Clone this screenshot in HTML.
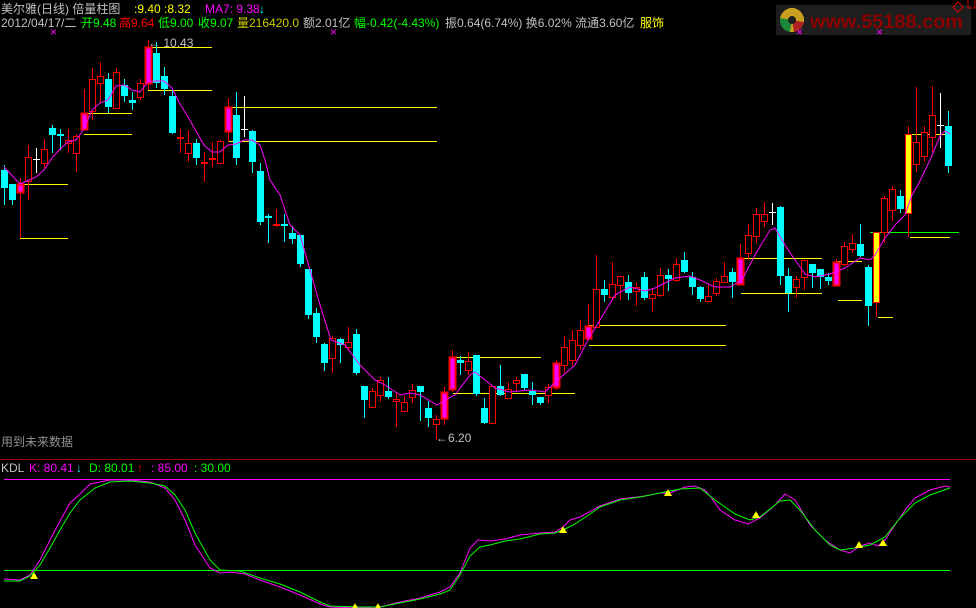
<!DOCTYPE html>
<html><head><meta charset="utf-8"><style>
html,body{margin:0;padding:0;background:#000;width:976px;height:608px;overflow:hidden}
svg{display:block}
text{font-family:"Liberation Sans","Noto Sans CJK SC",sans-serif;font-size:12px}
.r{fill:#000;stroke:#f00;stroke-width:1}
.m{fill:#f0f;stroke:#f00;stroke-width:2}
.c{fill:#0ff}
.y{fill:#ff0;stroke:#f00;stroke-width:1}
.wr{stroke:#f00;stroke-width:1}
.wc{stroke:#0ff;stroke-width:1}
.ww{stroke:#fff;stroke-width:1}
.hl{stroke:#ff0;stroke-width:1}
</style></head><body>
<svg width="976" height="608" viewBox="0 0 976 608" xmlns="http://www.w3.org/2000/svg" shape-rendering="crispEdges">
<rect width="976" height="608" fill="#000"/>
<text x="1" y="13" fill="#c0c0c0">美尔雅(日线) 倍量柱图</text>
<text x="134" y="13" fill="#ff0">:9.40 :8.32</text>
<text x="205" y="13" fill="#f0f">MA7: 9.38</text>
<text x="259" y="13" fill="#0ff">↓</text>
<text x="1" y="27" fill="#c0c0c0">2012/04/17/二</text>
<text x="81" y="27" fill="#0f0">开9.48</text>
<text x="119" y="27" fill="#f00">高9.64</text>
<text x="158" y="27" fill="#0f0">低9.00</text>
<text x="198" y="27" fill="#0f0">收9.07</text>
<text x="237" y="27" fill="#cc0">量216420.0</text>
<text x="303" y="27" fill="#c0c0c0">额2.01亿</text>
<text x="354" y="27" fill="#0f0">幅-0.42(-4.43%)</text>
<text x="445" y="27" fill="#c0c0c0">振0.64(6.74%) 换6.02% 流通3.60亿</text>
<text x="640" y="27" fill="#ff0">服饰</text>
<rect x="776" y="5" width="195" height="30" fill="#1e1e1e"/>
<circle cx="792" cy="20" r="12" fill="#c8a020"/>
<path d="M792 20 L780 18 A12 12 0 0 0 790 32 Z" fill="#1a8a3a"/>
<path d="M792 20 L804 22 A12 12 0 0 1 794 32 Z" fill="#b02020"/>
<circle cx="792" cy="20" r="4" fill="#1e1e1e"/>
<text x="810" y="28" fill="#8b0000" textLength="153" lengthAdjust="spacingAndGlyphs" style="font-size:19px;font-weight:bold">www.55188.com</text>
<path d="M958 2 L963 7 L958 12 L953 7 Z" fill="none" stroke="#c00"/>
<path d="M968 0 V8 H975 V0" fill="none" stroke="#c00"/>
<g fill="#f0f" style="font-size:9px"><text x="50" y="36">×</text><text x="330" y="36">×</text><text x="796" y="36">×</text><text x="876" y="36">×</text></g>
<g class="hl">
<line x1="20" y1="184.5" x2="68" y2="184.5"/><line x1="20" y1="238.5" x2="68" y2="238.5"/>
<line x1="84" y1="113.5" x2="132" y2="113.5"/><line x1="84" y1="134.5" x2="132" y2="134.5"/>
<line x1="148" y1="47.5" x2="212" y2="47.5"/><line x1="148" y1="90.5" x2="212" y2="90.5"/>
<line x1="228" y1="107.5" x2="437" y2="107.5"/><line x1="228" y1="141.5" x2="437" y2="141.5"/>
<line x1="453" y1="357.5" x2="541" y2="357.5"/><line x1="453" y1="393.5" x2="575" y2="393.5"/>
<line x1="589" y1="325.5" x2="726" y2="325.5"/><line x1="589" y1="345.5" x2="726" y2="345.5"/>
<line x1="741" y1="258.5" x2="822" y2="258.5"/><line x1="741" y1="293.5" x2="822" y2="293.5"/>
<line x1="838" y1="261.5" x2="862" y2="261.5"/><line x1="838" y1="300.5" x2="862" y2="300.5"/>
<line x1="878" y1="317.5" x2="893" y2="317.5"/>
<line x1="910" y1="237.5" x2="950" y2="237.5"/><line x1="910" y1="134.5" x2="948" y2="134.5"/>
</g>
<line x1="870" y1="232.5" x2="959" y2="232.5" stroke="#0f0"/>
<text x="148" y="47" fill="#c0c0c0">← 10.43</text>
<text x="436" y="442" fill="#c0c0c0">←6.20</text>
<text x="1" y="446" fill="#909090">用到未来数据</text>
<g id="candles">
<line class="wc" x1="4.5" y1="165" x2="4.5" y2="205"/><rect class="c" x="1" y="170" width="7" height="18"/>
<line class="wc" x1="12.5" y1="184" x2="12.5" y2="205"/><rect class="c" x="9" y="184" width="7" height="16"/>
<line class="wr" x1="20.5" y1="178" x2="20.5" y2="238"/><rect class="m" x="17.5" y="184.5" width="6" height="8"/>
<line class="wr" x1="28.5" y1="145" x2="28.5" y2="200"/><rect class="r" x="25.5" y="157.5" width="6" height="24"/>
<line class="ww" x1="36.5" y1="148" x2="36.5" y2="173"/><line class="ww" x1="33" y1="159.5" x2="40" y2="159.5"/>
<line class="wr" x1="44.5" y1="139" x2="44.5" y2="168"/><rect class="r" x="41.5" y="149.5" width="6" height="14"/>
<line class="wc" x1="52.5" y1="125" x2="52.5" y2="153"/><rect class="c" x="49" y="128" width="7" height="7"/>
<line class="wc" x1="60.5" y1="129" x2="60.5" y2="150"/><rect class="c" x="57" y="134" width="7" height="2"/>
<line class="wr" x1="68.5" y1="129" x2="68.5" y2="153"/><rect class="r" x="65.5" y="140.5" width="6" height="3"/>
<line class="wr" x1="76.5" y1="134" x2="76.5" y2="172"/><rect class="r" x="73.5" y="136.5" width="6" height="17"/>
<line class="wr" x1="84.5" y1="89" x2="84.5" y2="130"/><rect class="m" x="81.5" y="113.5" width="6" height="16"/>
<line class="wr" x1="92.5" y1="68" x2="92.5" y2="120"/><rect class="r" x="89.5" y="79.5" width="6" height="32"/>
<line class="wr" x1="100.5" y1="62" x2="100.5" y2="103"/><rect class="r" x="97.5" y="76.5" width="6" height="7"/>
<line class="wc" x1="108.5" y1="73" x2="108.5" y2="113"/><rect class="c" x="105" y="79" width="7" height="28"/>
<line class="wr" x1="116.5" y1="68" x2="116.5" y2="108"/><rect class="r" x="113.5" y="72.5" width="6" height="36"/>
<line class="wc" x1="124.5" y1="79" x2="124.5" y2="102"/><rect class="c" x="121" y="85" width="7" height="11"/>
<line class="wc" x1="132.5" y1="92" x2="132.5" y2="110"/><rect class="c" x="129" y="100" width="7" height="3"/>
<line class="wr" x1="140.5" y1="79" x2="140.5" y2="100"/><rect class="r" x="137.5" y="83.5" width="6" height="14"/>
<line class="wr" x1="148.5" y1="40" x2="148.5" y2="90"/><rect class="m" x="145.5" y="47.5" width="6" height="36"/>
<line class="wc" x1="156.5" y1="42" x2="156.5" y2="88"/><rect class="c" x="153" y="53" width="7" height="30"/>
<line class="wc" x1="164.5" y1="67" x2="164.5" y2="95"/><rect class="c" x="161" y="76" width="7" height="13"/>
<line class="wc" x1="172.5" y1="90" x2="172.5" y2="134"/><rect class="c" x="169" y="96" width="7" height="37"/>
<line class="wr" x1="180.5" y1="129" x2="180.5" y2="153"/><rect fill="#f00" x="177" y="137" width="7" height="2"/>
<line class="wr" x1="188.5" y1="130" x2="188.5" y2="162"/><rect class="r" x="185.5" y="143.5" width="6" height="10"/>
<line class="wc" x1="196.5" y1="139" x2="196.5" y2="165"/><rect class="c" x="193" y="143" width="7" height="15"/>
<line class="wr" x1="204.5" y1="152" x2="204.5" y2="182"/><rect fill="#f00" x="201" y="162" width="7" height="2"/>
<line class="wr" x1="212.5" y1="142" x2="212.5" y2="167"/><rect fill="#f00" x="209" y="158" width="7" height="2"/>
<line class="wr" x1="220.5" y1="140" x2="220.5" y2="164"/><rect class="r" x="217.5" y="141.5" width="6" height="22"/>
<line class="wr" x1="228.5" y1="98" x2="228.5" y2="142"/><rect class="m" x="225.5" y="107.5" width="6" height="24"/>
<line class="wc" x1="236.5" y1="92" x2="236.5" y2="165"/><rect class="c" x="233" y="115" width="7" height="43"/>
<line class="ww" x1="244.5" y1="96" x2="244.5" y2="137"/><line class="ww" x1="241" y1="129.5" x2="248" y2="129.5"/>
<line class="wc" x1="252.5" y1="130" x2="252.5" y2="173"/><rect class="c" x="249" y="131" width="7" height="31"/>
<line class="wc" x1="260.5" y1="163" x2="260.5" y2="225"/><rect class="c" x="257" y="171" width="7" height="51"/>
<line class="wc" x1="268.5" y1="214" x2="268.5" y2="243"/><rect class="c" x="265" y="216" width="7" height="2"/>
<line class="wr" x1="276.5" y1="209" x2="276.5" y2="227"/><rect fill="#f00" x="273" y="224" width="7" height="2"/>
<line class="wc" x1="284.5" y1="214" x2="284.5" y2="242"/><rect class="c" x="281" y="224" width="7" height="2"/>
<line class="wc" x1="292.5" y1="226" x2="292.5" y2="244"/><rect class="c" x="289" y="233" width="7" height="6"/>
<line class="wc" x1="300.5" y1="235" x2="300.5" y2="267"/><rect class="c" x="297" y="235" width="7" height="29"/>
<line class="wc" x1="308.5" y1="269" x2="308.5" y2="319"/><rect class="c" x="305" y="269" width="7" height="46"/>
<line class="wc" x1="316.5" y1="308" x2="316.5" y2="343"/><rect class="c" x="313" y="313" width="7" height="24"/>
<line class="wc" x1="324.5" y1="343" x2="324.5" y2="371"/><rect class="c" x="321" y="344" width="7" height="19"/>
<line class="wr" x1="332.5" y1="336" x2="332.5" y2="373"/><rect class="r" x="329.5" y="338.5" width="6" height="20"/>
<line class="wc" x1="340.5" y1="338" x2="340.5" y2="363"/><rect class="c" x="337" y="339" width="7" height="6"/>
<line class="wr" x1="348.5" y1="327" x2="348.5" y2="351"/><rect class="r" x="345.5" y="342.5" width="6" height="5"/>
<line class="wc" x1="356.5" y1="329" x2="356.5" y2="375"/><rect class="c" x="353" y="334" width="7" height="39"/>
<line class="wc" x1="364.5" y1="386" x2="364.5" y2="418"/><rect class="c" x="361" y="386" width="7" height="14"/>
<line class="wr" x1="372.5" y1="388" x2="372.5" y2="407"/><rect class="r" x="369.5" y="391.5" width="6" height="16"/>
<line class="wr" x1="380.5" y1="377" x2="380.5" y2="402"/><rect class="r" x="377.5" y="380.5" width="6" height="15"/>
<line class="wc" x1="388.5" y1="377" x2="388.5" y2="399"/><rect class="c" x="385" y="391" width="7" height="6"/>
<line class="wr" x1="396.5" y1="393" x2="396.5" y2="427"/><rect class="r" x="393.5" y="399.5" width="6" height="2"/>
<line class="wr" x1="404.5" y1="396" x2="404.5" y2="412"/><rect class="r" x="401.5" y="402.5" width="6" height="9"/>
<line class="wr" x1="412.5" y1="384" x2="412.5" y2="403"/><rect class="r" x="409.5" y="390.5" width="6" height="7"/>
<line class="wc" x1="420.5" y1="386" x2="420.5" y2="421"/><rect class="c" x="417" y="386" width="7" height="6"/>
<line class="wc" x1="428.5" y1="401" x2="428.5" y2="427"/><rect class="c" x="425" y="408" width="7" height="10"/>
<line class="wr" x1="436.5" y1="415" x2="436.5" y2="440"/><rect class="r" x="433.5" y="419.5" width="6" height="5"/>
<line class="wr" x1="444.5" y1="387" x2="444.5" y2="425"/><rect class="m" x="441.5" y="392.5" width="6" height="26"/>
<line class="wr" x1="452.5" y1="350" x2="452.5" y2="392"/><rect class="m" x="449.5" y="357.5" width="6" height="32"/>
<line class="wc" x1="460.5" y1="356" x2="460.5" y2="375"/><rect class="c" x="457" y="360" width="7" height="3"/>
<line class="wr" x1="468.5" y1="352" x2="468.5" y2="375"/><rect class="r" x="465.5" y="361.5" width="6" height="9"/>
<line class="wc" x1="476.5" y1="355" x2="476.5" y2="396"/><rect class="c" x="473" y="355" width="7" height="39"/>
<line class="wc" x1="484.5" y1="398" x2="484.5" y2="424"/><rect class="c" x="481" y="408" width="7" height="15"/>
<line class="wr" x1="492.5" y1="386" x2="492.5" y2="424"/><rect class="r" x="489.5" y="386.5" width="6" height="37"/>
<line class="wc" x1="500.5" y1="365" x2="500.5" y2="396"/><rect class="c" x="497" y="386" width="7" height="9"/>
<line class="wr" x1="508.5" y1="382" x2="508.5" y2="399"/><rect class="r" x="505.5" y="389.5" width="6" height="9"/>
<line class="wr" x1="516.5" y1="377" x2="516.5" y2="391"/><rect class="r" x="513.5" y="380.5" width="6" height="3"/>
<line class="wc" x1="524.5" y1="374" x2="524.5" y2="390"/><rect class="c" x="521" y="374" width="7" height="14"/>
<line class="wc" x1="532.5" y1="382" x2="532.5" y2="405"/><rect class="c" x="529" y="391" width="7" height="4"/>
<line class="wc" x1="540.5" y1="397" x2="540.5" y2="405"/><rect class="c" x="537" y="397" width="7" height="6"/>
<line class="wr" x1="548.5" y1="384" x2="548.5" y2="403"/><rect class="r" x="545.5" y="387.5" width="6" height="8"/>
<line class="wr" x1="556.5" y1="360" x2="556.5" y2="390"/><rect class="m" x="553.5" y="363.5" width="6" height="24"/>
<line class="wr" x1="564.5" y1="336" x2="564.5" y2="373"/><rect class="r" x="561.5" y="347.5" width="6" height="18"/>
<line class="wr" x1="572.5" y1="330" x2="572.5" y2="365"/><rect class="r" x="569.5" y="340.5" width="6" height="20"/>
<line class="wr" x1="580.5" y1="320" x2="580.5" y2="350"/><rect class="r" x="577.5" y="330.5" width="6" height="15"/>
<line class="wr" x1="588.5" y1="304" x2="588.5" y2="340"/><rect class="m" x="585.5" y="326.5" width="6" height="12"/>
<line class="wr" x1="596.5" y1="255" x2="596.5" y2="327"/><rect class="r" x="593.5" y="289.5" width="6" height="38"/>
<line class="wc" x1="604.5" y1="280" x2="604.5" y2="302"/><rect class="c" x="601" y="289" width="7" height="6"/>
<line class="wr" x1="612.5" y1="262" x2="612.5" y2="300"/><rect class="r" x="609.5" y="284.5" width="6" height="13"/>
<line class="wr" x1="620.5" y1="276" x2="620.5" y2="300"/><rect class="r" x="617.5" y="276.5" width="6" height="9"/>
<line class="wc" x1="628.5" y1="275" x2="628.5" y2="300"/><rect class="c" x="625" y="282" width="7" height="11"/>
<line class="wr" x1="636.5" y1="283" x2="636.5" y2="306"/><rect class="r" x="633.5" y="287.5" width="6" height="4"/>
<line class="wc" x1="644.5" y1="272" x2="644.5" y2="300"/><rect class="c" x="641" y="277" width="7" height="21"/>
<line class="wr" x1="652.5" y1="288" x2="652.5" y2="312"/><rect class="r" x="649.5" y="294.5" width="6" height="4"/>
<line class="wr" x1="660.5" y1="268" x2="660.5" y2="297"/><rect class="r" x="657.5" y="275.5" width="6" height="20"/>
<line class="wc" x1="668.5" y1="269" x2="668.5" y2="291"/><rect class="c" x="665" y="275" width="7" height="4"/>
<line class="wr" x1="676.5" y1="258" x2="676.5" y2="282"/><rect class="r" x="673.5" y="264.5" width="6" height="16"/>
<line class="wc" x1="684.5" y1="252" x2="684.5" y2="273"/><rect class="c" x="681" y="260" width="7" height="12"/>
<line class="wc" x1="692.5" y1="272" x2="692.5" y2="295"/><rect class="c" x="689" y="277" width="7" height="10"/>
<line class="wc" x1="700.5" y1="286" x2="700.5" y2="302"/><rect class="c" x="697" y="287" width="7" height="12"/>
<line class="wr" x1="708.5" y1="285" x2="708.5" y2="302"/><rect class="r" x="705.5" y="296.5" width="6" height="5"/>
<line class="wr" x1="716.5" y1="278" x2="716.5" y2="296"/><rect class="r" x="713.5" y="281.5" width="6" height="12"/>
<line class="wr" x1="724.5" y1="262" x2="724.5" y2="283"/><rect class="r" x="721.5" y="276.5" width="6" height="6"/>
<line class="wc" x1="732.5" y1="268" x2="732.5" y2="298"/><rect class="c" x="729" y="272" width="7" height="10"/>
<line class="wr" x1="740.5" y1="244" x2="740.5" y2="284"/><rect class="m" x="737.5" y="258.5" width="6" height="26"/>
<line class="wr" x1="748.5" y1="224" x2="748.5" y2="260"/><rect class="r" x="745.5" y="235.5" width="6" height="18"/>
<line class="wr" x1="756.5" y1="208" x2="756.5" y2="243"/><rect class="r" x="753.5" y="214.5" width="6" height="22"/>
<line class="wr" x1="764.5" y1="202" x2="764.5" y2="227"/><rect class="r" x="761.5" y="214.5" width="6" height="7"/>
<line class="ww" x1="772.5" y1="203" x2="772.5" y2="225"/><line class="ww" x1="769" y1="212.5" x2="776" y2="212.5"/>
<line class="wc" x1="780.5" y1="206" x2="780.5" y2="285"/><rect class="c" x="777" y="207" width="7" height="69"/>
<line class="wc" x1="788.5" y1="268" x2="788.5" y2="312"/><rect class="c" x="785" y="276" width="7" height="17"/>
<line class="wr" x1="796.5" y1="276" x2="796.5" y2="298"/><rect class="r" x="793.5" y="279.5" width="6" height="8"/>
<line class="wr" x1="804.5" y1="260" x2="804.5" y2="290"/><rect class="r" x="801.5" y="260.5" width="6" height="17"/>
<line class="wc" x1="812.5" y1="264" x2="812.5" y2="288"/><rect class="c" x="809" y="264" width="7" height="9"/>
<line class="wc" x1="820.5" y1="269" x2="820.5" y2="289"/><rect class="c" x="817" y="269" width="7" height="8"/>
<line class="wc" x1="828.5" y1="273" x2="828.5" y2="285"/><rect class="c" x="825" y="277" width="7" height="4"/>
<line class="wr" x1="836.5" y1="259" x2="836.5" y2="285"/><rect class="m" x="833.5" y="262.5" width="6" height="23"/>
<line class="wr" x1="844.5" y1="242" x2="844.5" y2="266"/><rect class="r" x="841.5" y="246.5" width="6" height="18"/>
<line class="wr" x1="852.5" y1="234" x2="852.5" y2="253"/><rect class="r" x="849.5" y="243.5" width="6" height="6"/>
<line class="wc" x1="860.5" y1="224" x2="860.5" y2="257"/><rect class="c" x="857" y="244" width="7" height="12"/>
<line class="wc" x1="868.5" y1="265" x2="868.5" y2="326"/><rect class="c" x="865" y="267" width="7" height="39"/>
<line class="wr" x1="876.5" y1="232" x2="876.5" y2="317"/><rect class="y" x="873.5" y="232.5" width="6" height="70"/>
<line class="wr" x1="884.5" y1="196" x2="884.5" y2="243"/><rect class="r" x="881.5" y="198.5" width="6" height="34"/>
<line class="wr" x1="892.5" y1="186" x2="892.5" y2="221"/><rect class="r" x="889.5" y="189.5" width="6" height="21"/>
<line class="wc" x1="900.5" y1="190" x2="900.5" y2="213"/><rect class="c" x="897" y="196" width="7" height="13"/>
<line class="wr" x1="908.5" y1="126" x2="908.5" y2="237"/><rect class="y" x="905.5" y="134.5" width="6" height="79"/>
<line class="wr" x1="916.5" y1="87" x2="916.5" y2="172"/><rect class="r" x="913.5" y="142.5" width="6" height="22"/>
<line class="wr" x1="924.5" y1="126" x2="924.5" y2="162"/><rect class="r" x="921.5" y="132.5" width="6" height="24"/>
<line class="wr" x1="932.5" y1="86" x2="932.5" y2="152"/><rect class="r" x="929.5" y="115.5" width="6" height="22"/>
<line class="ww" x1="940.5" y1="93" x2="940.5" y2="148"/><line class="ww" x1="937" y1="125.5" x2="944" y2="125.5"/>
<line class="wc" x1="948.5" y1="111" x2="948.5" y2="173"/><rect class="c" x="945" y="126" width="7" height="40"/>
</g>
<polyline fill="none" stroke="#f0f" stroke-width="1" shape-rendering="auto" points="4,167 20,184 36,177 44,170 52,158 60,149 68,142 76,140 84,129 92,110 100,103 108,100 116,86 124,85 132,90 140,92 148,82 156,81 164,81 172,88 180,104 188,117 196,131 204,145 212,152 220,152 228,145 236,144 244,140 252,140 260,145 265,160 270,180 280,195 290,225 300,235 310,270 320,305 331,340 345,345 360,365 375,380 385,385 400,395 410,393 420,395 437,405 445,400 455,395 470,375 475,372 485,380 495,388 510,392 530,390 545,392 560,378 575,365 589,338 600,320 615,295 630,287 645,291 655,288 665,283 675,278 690,276 700,280 715,287 730,287 742,280 755,255 770,230 775,228 785,245 795,260 805,274 815,277 830,274 845,268 860,258 870,260 875,255 885,238 895,225 905,215 912,195 918,185 930,160 940,136 945,131 950,134"/>
<line x1="0" y1="459.5" x2="976" y2="459.5" stroke="#a00000"/>
<text x="1" y="472" fill="#c0c0c0">KDL</text>
<text x="29" y="472" fill="#f0f">K: 80.41</text>
<text x="76" y="472" fill="#0ff">↓</text>
<text x="89" y="472" fill="#0f0">D: 80.01</text>
<text x="137" y="472" fill="#f00">↑</text>
<text x="151" y="472" fill="#f0f">: 85.00</text>
<text x="194" y="472" fill="#0f0">: 30.00</text>
<line x1="4" y1="479.5" x2="950" y2="479.5" stroke="#f0f"/>
<line x1="4" y1="570.5" x2="950" y2="570.5" stroke="#0f0"/>
<polyline fill="none" stroke="#f0f" stroke-width="1" shape-rendering="auto" points="4,579 20,580 30,575 40,560 50,540 60,521 70,503 80,494 90,484 110,480 130,480 150,482 165,488 175,500 185,520 195,545 210,568 220,573 230,572 245,574 260,580 280,587 300,595 320,604 330,607 360,608 380,607 400,602 420,598 440,592 450,587 460,573 470,548 478,540 490,541 505,539 520,535 540,533 555,532 563,527 570,520 580,517 600,506 620,499 645,496 660,493 670,493 685,487 695,486 705,490 710,496 720,510 735,520 748,524 760,518 775,505 785,494 795,500 800,508 810,525 825,540 840,550 850,553 860,546 870,543 878,546 885,540 895,525 905,510 915,498 930,490 945,486 950,487"/>
<polyline fill="none" stroke="#0f0" stroke-width="1" shape-rendering="auto" points="4,581 20,581 30,576 40,565 50,548 60,530 70,513 80,500 95,488 110,482 130,481 150,483 165,486 175,495 185,510 195,533 210,560 220,570 240,571 260,578 280,584 300,592 320,602 330,606 360,607 380,607 400,603 420,599 440,594 450,590 460,575 470,556 480,547 490,545 505,541 520,539 540,534 555,533 565,529 575,524 590,514 600,507 620,500 640,497 665,492 680,489 700,488 715,500 735,514 750,520 760,517 770,509 780,501 790,500 800,510 815,530 830,545 840,550 855,548 870,545 885,537 900,518 915,503 930,495 950,488"/>
<g fill="#ff0">
<path d="M34 572 L38 579 L30 579 Z"/><path d="M355 603 L359 610 L351 610 Z"/><path d="M378 603 L382 610 L374 610 Z"/>
<path d="M563 526 L567 533 L559 533 Z"/><path d="M668 489 L672 496 L664 496 Z"/><path d="M756 511 L760 518 L752 518 Z"/>
<path d="M859 541 L863 548 L855 548 Z"/><path d="M883 539 L887 546 L879 546 Z"/>
</g>
</svg>
</body></html>
